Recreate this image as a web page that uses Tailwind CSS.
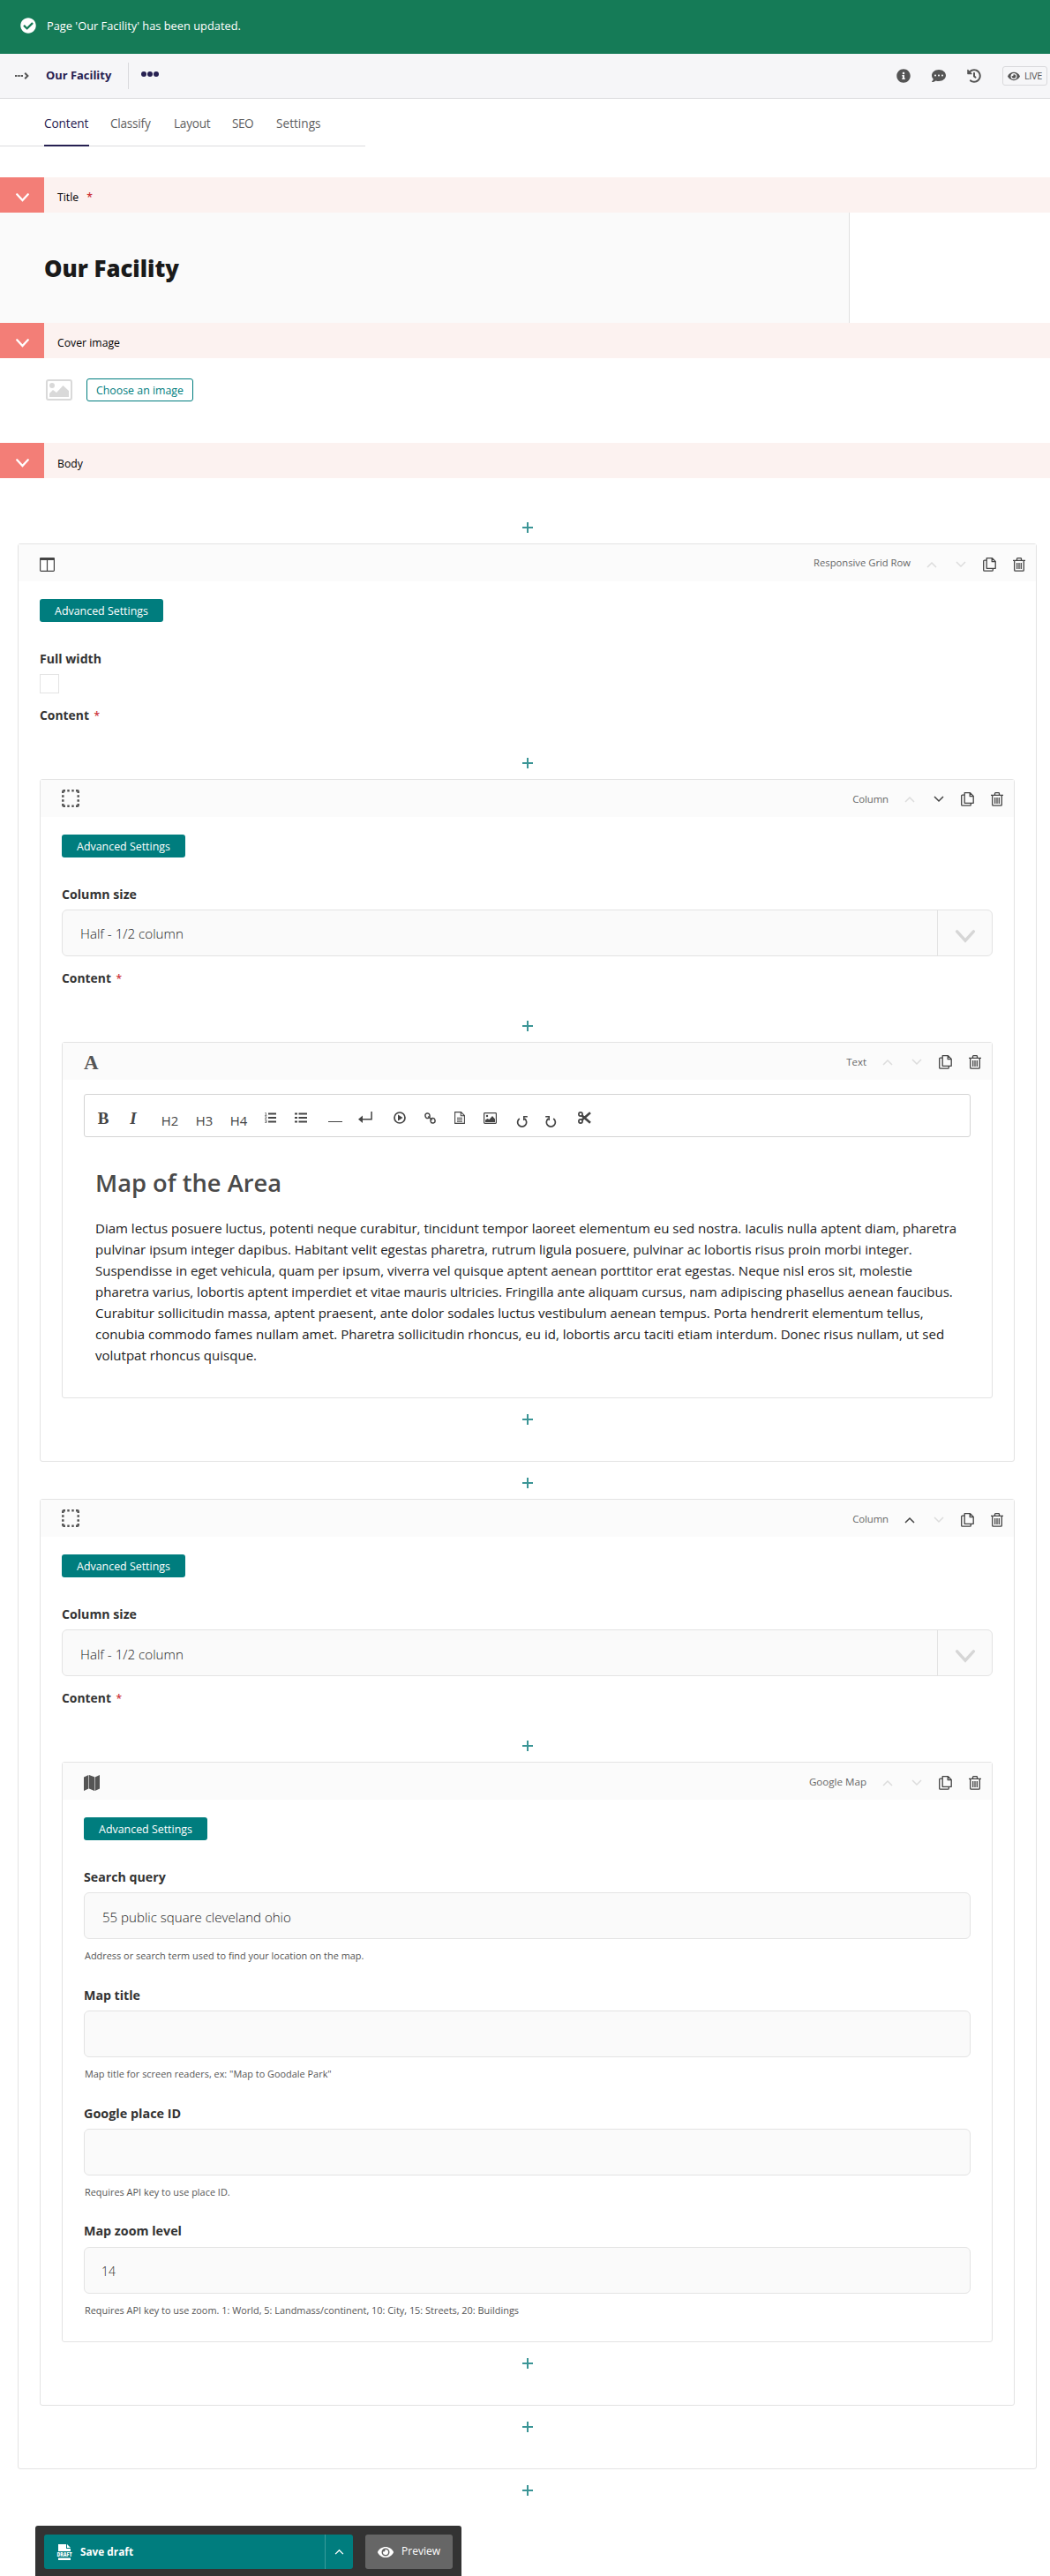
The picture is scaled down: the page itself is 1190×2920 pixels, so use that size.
<!DOCTYPE html>
<html lang="en">
<head>
<meta charset="utf-8">
<title>Editing: Our Facility</title>
<script src="https://cdn.jsdelivr.net/npm/@tailwindcss/browser@4"></script>
</head>
<body class="bg-white font-['Open_Sans',sans-serif] text-[#333] w-[1190px] h-[2920px] overflow-hidden">

<!-- Icon sprite -->
<svg width="0" height="0" class="hidden">
  <symbol id="up" viewBox="0 0 12 8"><path d="M1 7l5-5 5 5" fill="none" stroke="currentColor" stroke-width="1.500"/></symbol>
  <symbol id="down" viewBox="0 0 12 8"><path d="M1 1l5 5 5-5" fill="none" stroke="currentColor" stroke-width="1.500"/></symbol>
  <symbol id="chevron" viewBox="0 0 24 16"><path d="M2 2l10 11L22 2" fill="none" stroke="currentColor" stroke-width="3.600" stroke-linecap="round"/></symbol>
  <symbol id="copy" viewBox="0 0 15 16"><path d="M4 3.200H1.700a1 1 0 0 0-1 1v10a1 1 0 0 0 1 1h8.600a1 1 0 0 0 1-1V12.500" fill="none" stroke="currentColor" stroke-width="1.300"/><path d="M4.200.700h6.300l3.700 3.700v7.900h-10zM10.200.700v4h4" fill="none" stroke="currentColor" stroke-width="1.300" stroke-linejoin="round"/></symbol>
  <symbol id="trash" viewBox="0 0 14 16"><path d="M0 3.300h14M4.500 3V1.500a.8.800 0 0 1 .8-.8h3.400a.8.800 0 0 1 .8.800V3M1.700 3.500v10.700a1 1 0 0 0 1 1h8.600a1 1 0 0 0 1-1V3.500M4.700 6v7M7 6v7M9.300 6v7" fill="none" stroke="currentColor" stroke-width="1.300"/></symbol>
  <symbol id="plus" viewBox="0 0 12 12"><path d="M6 0v12M0 6h12" stroke="currentColor" stroke-width="2"/></symbol>
  <symbol id="dashed" viewBox="0 0 20 20"><path d="M1.300 4V2.300a1 1 0 0 1 1-1H4M16 1.300h1.700a1 1 0 0 1 1 1V4M18.700 16v1.700a1 1 0 0 1-1 1H16M4 18.700H2.300a1 1 0 0 1-1-1V16M6.300 1.300h2.400M11.300 1.300h2.400M6.300 18.700h2.400M11.300 18.700h2.400M1.300 6.300v2.400M1.300 11.300v2.400M18.700 6.300v2.400M18.700 11.300v2.400" fill="none" stroke="currentColor" stroke-width="2.500"/></symbol>
  <symbol id="eye" viewBox="0 0 576 512"><path fill="currentColor" d="M572.520 241.400C518.290 135.590 410.930 64 288 64S57.680 135.640 3.480 241.410a32.350 32.350 0 0 0 0 29.190C57.710 376.410 165.070 448 288 448s230.320-71.640 284.520-177.410a32.350 32.350 0 0 0 0-29.190zM288 400a144 144 0 1 1 144-144 143.930 143.930 0 0 1-144 144zm0-240a95.310 95.310 0 0 0-25.310 3.790 47.850 47.850 0 0 1-66.900 66.900A95.780 95.780 0 1 0 288 160z"/></symbol>
</svg>

<!-- Success message -->
<div class="flex h-[61px] items-center bg-[#157b57] pl-[23px] text-white">
  <svg class="mb-[3px] h-[18px] w-[18px]" viewBox="0 0 512 512"><path fill="currentColor" d="M504 256c0 136.967-111.033 248-248 248S8 392.967 8 256 119.033 8 256 8s248 111.033 248 248zM227.314 387.314l184-184c6.248-6.248 6.248-16.379 0-22.627l-22.627-22.627c-6.248-6.249-16.379-6.249-22.628 0L216 308.118l-70.059-70.059c-6.248-6.248-16.379-6.248-22.628 0l-22.627 22.627c-6.248 6.248-6.248 16.379 0 22.627l104 104c6.249 6.249 16.379 6.249 22.628.001z"/></svg>
  <p class="ml-3 pb-0.5 text-[12.83px]">Page 'Our Facility' has been updated.</p>
</div>

<!-- Page header -->
<header class="flex h-[51px] items-center border-b border-[#dcdcde] bg-[#f6f6f8] pl-[17px] pr-[3px]">
  <svg class="h-[8px] w-[16px] text-[#555]" viewBox="0 0 16 8"><path d="M0 4h2.400M3.300 4h2.400M6.600 4H9" stroke="currentColor" stroke-width="2"/><path d="M11.200.800l3.200 3.200-3.200 3.200" fill="none" stroke="currentColor" stroke-width="2"/></svg>
  <h1 class="ml-[19px] text-[12.92px] font-bold text-[#262051]">Our Facility</h1>
  <div class="ml-[19px] h-[30px] w-px bg-[#d9d9dc]"></div>
  <svg class="mb-1 ml-[14px] h-[6px] w-[20px] text-[#262051]" viewBox="0 0 20 6"><g fill="currentColor"><circle cx="3" cy="3" r="3"/><circle cx="10" cy="3" r="3"/><circle cx="17" cy="3" r="3"/></g></svg>
  <div class="ml-auto flex items-center text-[#555]">
    <svg class="h-4 w-4" viewBox="0 0 512 512"><path fill="currentColor" d="M256 8C119.043 8 8 119.083 8 256c0 136.997 111.043 248 248 248s248-111.003 248-248C504 119.083 392.957 8 256 8zm0 110c23.196 0 42 18.804 42 42s-18.804 42-42 42-42-18.804-42-42 18.804-42 42-42zm56 254c0 6.627-5.373 12-12 12h-88c-6.627 0-12-5.373-12-12v-24c0-6.627 5.373-12 12-12h12v-64h-12c-6.627 0-12-5.373-12-12v-24c0-6.627 5.373-12 12-12h64c6.627 0 12 5.373 12 12v100h12c6.627 0 12 5.373 12 12v24z"/></svg>
    <svg class="ml-6 h-4 w-4" viewBox="0 0 512 512"><path fill="currentColor" d="M256 32C114.600 32 0 125.100 0 240c0 49.600 21.400 95 57 130.700C44.500 421.100 2.700 466 2.200 466.500c-2.200 2.300-2.800 5.700-1.500 8.700S4.800 480 8 480c66.300 0 116-31.800 140.600-51.400 32.700 12.300 69 19.400 107.400 19.400 141.400 0 256-93.100 256-208S397.400 32 256 32zM128 272c-17.700 0-32-14.300-32-32s14.300-32 32-32 32 14.300 32 32-14.300 32-32 32zm128 0c-17.700 0-32-14.300-32-32s14.300-32 32-32 32 14.300 32 32-14.300 32-32 32zm128 0c-17.700 0-32-14.300-32-32s14.300-32 32-32 32 14.300 32 32-14.300 32-32 32z"/></svg>
    <svg class="ml-6 h-4 w-4" viewBox="0 0 512 512"><path fill="currentColor" d="M504 255.531c.253 136.640-111.180 248.372-247.820 248.468-59.015.042-113.223-20.530-155.822-54.911-11.077-8.940-11.905-25.541-1.839-35.607l11.267-11.267c8.609-8.609 22.353-9.551 31.891-1.984C173.062 425.135 212.781 440 256 440c101.705 0 184-82.311 184-184 0-101.705-82.311-184-184-184-48.814 0-93.149 18.969-126.068 49.932l50.754 50.754c10.080 10.080 2.941 27.314-11.313 27.314H24c-8.837 0-16-7.163-16-16V38.627c0-14.254 17.234-21.393 27.314-11.314l49.372 49.372C129.209 34.136 189.552 8 256 8c136.810 0 247.747 110.780 248 247.531zm-180.912 78.784l9.823-12.630c8.138-10.463 6.253-25.542-4.210-33.679L288 256.349V152c0-13.255-10.745-24-24-24h-16c-13.255 0-24 10.745-24 24v135.651l65.409 50.874c10.463 8.137 25.541 6.253 33.679-4.210z"/></svg>
    <div class="ml-6 flex h-[22px] w-[51px] items-center rounded-[3px] border border-[#d9d9dc] pl-[5px]">
      <svg class="h-[13px] w-[14px]"><use href="#eye"/></svg>
      <span class="ml-[5px] text-[11px] tracking-[-0.4px]">LIVE</span>
    </div>
  </div>
</header>

<!-- Tabs -->
<nav class="flex h-[54px] w-[414px] border-b border-[#dcdcde] pl-[50px] text-[13.65px] font-medium text-[#5f5f5f]">
  <a class="mb-[-1px] w-[51px] border-b-2 border-[#262051] pt-[18px] leading-5 tracking-[-0.1px] text-[#262051]">Content</a>
  <a class="ml-[24px] w-[48px] pt-[18px] leading-5 tracking-[-0.25px]">Classify</a>
  <a class="ml-[24px] w-[43px] pt-[18px] leading-5 tracking-[-0.25px]">Layout</a>
  <a class="ml-[23px] w-[25px] pt-[18px] leading-5 tracking-[-0.5px]">SEO</a>
  <a class="ml-[25px] pt-[18px] leading-5">Settings</a>
</nav>

<main>
  <!-- Title -->
  <div class="mt-[35px] flex h-[40px] bg-[#fcf2f0] text-[12.24px] text-black">
    <div class="flex w-[50px] items-center justify-center bg-[#f37e77] pt-[6px] text-white"><svg class="h-[10px] w-[15px]"><use href="#chevron"/></svg></div>
    <div class="pl-[15px] pt-[13px] leading-5">Title <span class="ml-[6px] font-semibold text-[#cd3238]">*</span></div>
  </div>
  <div class="flex h-[125px] w-[963px] items-center border-r border-[#e0e0e0] bg-[#fafafa] pl-[50px] pt-0.5">
    <div class="text-[25.76px] font-extrabold text-[#1a1a1a]">Our Facility</div>
  </div>

  <!-- Cover image -->
  <div class="flex h-[40px] bg-[#fcf2f0] text-[12.24px] text-black">
    <div class="flex w-[50px] items-center justify-center bg-[#f37e77] pt-[6px] text-white"><svg class="h-[10px] w-[15px]"><use href="#chevron"/></svg></div>
    <div class="pl-[15px] pt-[13px] leading-5">Cover image</div>
  </div>
  <div class="mt-[23px] flex h-[26px] items-center pl-[52px]">
    <svg class="h-[24px] w-[30px] text-[#d9d9d9]" viewBox="0 0 30 24"><rect x="1" y="1" width="28" height="22" rx="2" fill="none" stroke="currentColor" stroke-width="2"/><circle cx="7" cy="7" r="3" fill="currentColor"/><path d="M4 20v-4l4-4 4 3 7.500-8L26 13v7z" fill="currentColor"/></svg>
    <button class="ml-4 h-[26px] w-[121px] rounded-[3px] border border-[#007d7e] text-[12.36px] leading-[25px] text-[#007d7e]">Choose an image</button>
  </div>

  <!-- Body -->
  <div class="mt-[47px] flex h-[40px] bg-[#fcf2f0] text-[12.24px] text-black">
    <div class="flex w-[50px] items-center justify-center bg-[#f37e77] pt-[6px] text-white"><svg class="h-[10px] w-[15px]"><use href="#chevron"/></svg></div>
    <div class="pl-[15px] pt-[14px] leading-5">Body</div>
  </div>

  <div class="ml-5 w-[1155px] pt-8">
    <div class="flex h-[42px] justify-center pt-[18px] text-[#3b9596]"><svg class="h-3 w-3"><use href="#plus"/></svg></div>

    <!-- Responsive grid row -->
    <section class="rounded-[3px] border border-[#e3e3e3] px-6 pb-[29px]">
      <div class="-mx-6 flex h-[42px] items-center bg-[#fbfbfb] pl-6 pr-[3px] text-[11.24px] text-[#666]">
        <svg class="mt-1 h-[16px] w-[17px] text-[#444]" viewBox="0 0 17 16"><path d="M.6 1.500h15.800v13a.9.900 0 0 1-.9.900h-14a.9.900 0 0 1-.9-.9zM8.500 2v13" fill="#fff" stroke="currentColor" stroke-width="1.200"/><path d="M0 1a1 1 0 0 1 1-1h15a1 1 0 0 1 1 1v2H0z" fill="currentColor"/></svg>
        <span class="ml-auto mr-[7px] pt-px">Responsive Grid Row</span>
        <div class="flex w-[132px] pt-[3px] text-[#444]">
          <div class="flex w-[33px] items-center justify-center text-[#dcdcdc]"><svg class="h-[8px] w-[12px]"><use href="#up"/></svg></div>
          <div class="flex w-[33px] items-center justify-center text-[#dcdcdc]"><svg class="h-[8px] w-[12px]"><use href="#down"/></svg></div>
          <div class="flex w-[33px] justify-center"><svg class="h-[16px] w-[15px]"><use href="#copy"/></svg></div>
          <div class="flex w-[33px] justify-center"><svg class="h-[16px] w-[14px]"><use href="#trash"/></svg></div>
        </div>
      </div>
      <button class="mt-5 block h-[26px] w-[140px] rounded-[3px] bg-[#007d7e] text-[12.42px] leading-[28px] text-white">Advanced Settings</button>
      <div class="mt-[31px] h-5 text-[14.1px] font-bold leading-[21px]">Full width</div>
      <div class="mt-2 h-[22px] w-[22px] border border-[#e3e3e3] bg-white"></div>
      <div class="mt-[15px] h-5 text-[13.9px] font-bold leading-5">Content <span class="ml-[2px] text-[12px] font-semibold text-[#cd3238]">*</span></div>
      <div class="mt-5 flex h-[42px] justify-center pt-[18px] text-[#3b9596]"><svg class="h-3 w-3"><use href="#plus"/></svg></div>

      <!-- Column 1 -->
      <section class="rounded-[3px] border border-[#e3e3e3] px-6 pb-[29px]">
        <div class="-mx-6 flex h-[42px] items-center bg-[#fbfbfb] pl-6 pr-[3px] text-[11.4px] text-[#666]">
          <svg class="h-[20px] w-[20px] text-[#555]"><use href="#dashed"/></svg>
          <span class="ml-auto mr-[7px] pt-px tracking-[-0.1px]">Column</span>
          <div class="flex w-[132px] pt-[2px] text-[#444]">
            <div class="flex w-[33px] items-center justify-center text-[#dcdcdc]"><svg class="h-[8px] w-[12px]"><use href="#up"/></svg></div>
            <div class="flex w-[33px] items-center justify-center"><svg class="h-[8px] w-[12px]"><use href="#down"/></svg></div>
            <div class="flex w-[33px] justify-center"><svg class="h-[16px] w-[15px]"><use href="#copy"/></svg></div>
            <div class="flex w-[33px] justify-center"><svg class="h-[16px] w-[14px]"><use href="#trash"/></svg></div>
          </div>
        </div>
        <button class="mt-5 block h-[26px] w-[140px] rounded-[3px] bg-[#007d7e] text-[12.42px] leading-[27px] text-white">Advanced Settings</button>
        <div class="mt-[31px] h-5 text-[14.17px] font-bold leading-[22px]">Column size</div>
        <div class="mt-2 flex h-[53px] items-center rounded-[6px] border border-[#e3e3e3] bg-[#fafafa] pl-5 text-[15.17px] font-light text-[#222]">
          <span class="pt-0.5">Half - 1/2 column</span>
          <div class="ml-auto flex h-full w-[62px] items-center justify-center border-l border-[#e3e3e3] pt-2 text-[#d6d6d6]"><svg class="h-[15px] w-[24px]"><use href="#chevron"/></svg></div>
        </div>
        <div class="mt-[15px] h-5 text-[13.9px] font-bold leading-5">Content <span class="ml-[2px] text-[12px] font-semibold text-[#cd3238]">*</span></div>
        <div class="mt-5 flex h-[42px] justify-center pt-[18px] text-[#3b9596]"><svg class="h-3 w-3"><use href="#plus"/></svg></div>

        <!-- Text block -->
        <section class="rounded-[3px] border border-[#e3e3e3] px-6 pb-[36px]">
          <div class="-mx-6 flex h-[42px] items-center bg-[#fbfbfb] pl-6 pr-[3px] text-[11.4px] text-[#666]">
            <span class="mt-0.5 font-['Liberation_Serif',serif] text-[23px] font-bold leading-none text-[#555]">A</span>
            <span class="ml-auto mr-[7px] pt-px">Text</span>
            <div class="flex w-[132px] pt-[2px] text-[#444]">
              <div class="flex w-[33px] items-center justify-center text-[#dcdcdc]"><svg class="h-[8px] w-[12px]"><use href="#up"/></svg></div>
              <div class="flex w-[33px] items-center justify-center text-[#dcdcdc]"><svg class="h-[8px] w-[12px]"><use href="#down"/></svg></div>
              <div class="flex w-[33px] justify-center"><svg class="h-[16px] w-[15px]"><use href="#copy"/></svg></div>
              <div class="flex w-[33px] justify-center"><svg class="h-[16px] w-[14px]"><use href="#trash"/></svg></div>
            </div>
          </div>
          <div class="mt-4 flex h-[49px] items-center rounded-[3px] border border-[#d4d4d4] pl-1 pt-[5px] text-[#444]">
            <div class="w-[34px] text-center font-['Liberation_Serif',serif] text-[19px] font-bold leading-none">B</div>
            <div class="w-[34px] text-center font-['Liberation_Serif',serif] text-[19px] font-bold italic leading-none">I</div>
            <div class="ml-[5px] w-[39px] pt-[6px] text-center text-[14.9px] leading-5">H2</div>
            <div class="w-[39px] pt-[6px] text-center text-[14.9px] leading-5">H3</div>
            <div class="w-[39px] pt-[6px] text-center text-[14.9px] leading-5">H4</div>
            <div class="flex w-[33px] justify-center"><svg class="h-[12px] w-[13px]" viewBox="0 0 13 12"><path d="M4 1.500h9M4 6h9M4 10.500h9" stroke="currentColor" stroke-width="1.800"/><path d="M.4.500h1V3M0 3.400h2.400M.3 4.800h1.600v1.100l-1.600 1.200h2M.3 8.800h1.700v2.700H.3M.6 10.100H2" fill="none" stroke="currentColor" stroke-width=".7"/></svg></div>
            <div class="flex w-[35px] justify-center"><svg class="h-[12px] w-[14px]" viewBox="0 0 14 12"><path d="M4.500 1.500H14M4.500 6H14M4.500 10.500H14M0 1.500h3M0 6h3M0 10.500h3" stroke="currentColor" stroke-width="2.200"/></svg></div>
            <div class="ml-[5px] flex w-[34px] justify-center pt-[9px]"><div class="h-px w-[16px] bg-[#444]"></div></div>
            <div class="flex w-[34px] justify-center"><svg class="h-[14px] w-[16px]" viewBox="0 0 16 14"><path d="M15.100 0v8.700H3" fill="none" stroke="currentColor" stroke-width="1.500"/><path d="M0 8.700l5-4.200v8.400z" fill="currentColor"/></svg></div>
            <div class="ml-[5px] flex w-[34px] justify-center"><svg class="h-[14px] w-[14px]" viewBox="0 0 14 14"><circle cx="7" cy="7" r="6" fill="none" stroke="currentColor" stroke-width="1.700"/><path d="M5 3.500L10.500 7 5 10.500z" fill="currentColor"/></svg></div>
            <div class="flex w-[34px] justify-center"><svg class="h-[13px] w-[13px]" viewBox="0 0 13 13"><g fill="none" stroke="currentColor" stroke-width="1.500"><rect x="1" y="1" width="5" height="5.500" rx="2.300" transform="rotate(-10 3.500 3.700)"/><rect x="7" y="6.500" width="5" height="5.500" rx="2.300" transform="rotate(-10 9.500 9.200)"/><path d="M4.200 4.500l4.600 4"/></g></svg></div>
            <div class="flex w-[34px] justify-center"><svg class="h-[14px] w-[12px]" viewBox="0 0 12 14"><path d="M.600.600h6.900l3.900 3.900v8.900H.600zM7.300.800v4h4M3 7.200h6M3 9.200h6M3 11.200h6" fill="none" stroke="currentColor" stroke-width="1.100"/></svg></div>
            <div class="flex w-[34px] justify-center"><svg class="h-[13px] w-[15px]" viewBox="0 0 15 13"><rect x=".6" y=".6" width="13.800" height="11.800" rx=".8" fill="none" stroke="currentColor" stroke-width="1.200"/><circle cx="4" cy="4" r="1.200" fill="currentColor"/><path d="M2 11V8.500L4.500 7l2 1L10 4l3 3.500V11z" fill="currentColor"/></svg></div>
            <div class="ml-[3px] flex w-[33px] justify-center pt-[9px]"><svg class="h-[13px] w-[13px]" viewBox="0 0 13 13"><path d="M3.800 3A5 5 0 1 0 9.500 3" fill="none" stroke="currentColor" stroke-width="1.700"/><path d="M8 0h4.800v1.600H9.600V5H8z" fill="currentColor"/></svg></div>
            <div class="flex w-[33px] justify-center pt-[9px]"><svg class="h-[13px] w-[13px]" viewBox="0 0 13 13"><path d="M9.200 3A5 5 0 1 1 3.500 3" fill="none" stroke="currentColor" stroke-width="1.700"/><path d="M5 0H.200v1.600h3.200V5H5z" fill="currentColor"/></svg></div>
            <div class="ml-[4px] flex w-[34px] justify-center"><svg class="h-[14px] w-[15px]" viewBox="0 0 15 14"><g fill="none" stroke="currentColor"><circle cx="3" cy="3" r="2.100" stroke-width="1.700"/><circle cx="3" cy="11" r="2.100" stroke-width="1.700"/><path d="M4.500 4.500l9.500 8.300M4.500 9.500L14 1.200" stroke-width="2.600"/></g></svg></div>
          </div>
          <h2 class="ml-[13px] mt-[32px] h-[41px] whitespace-nowrap text-[27.3px] font-semibold leading-10 text-[#4a4a4a]">Map of the Area</h2>
          <p class="ml-[13px] mt-[18px] whitespace-nowrap text-[15.04px] leading-6 text-[#222]">Diam lectus posuere luctus, potenti neque curabitur, tincidunt tempor laoreet elementum eu sed nostra. Iaculis nulla aptent diam, pharetra<br>pulvinar ipsum integer dapibus. Habitant velit egestas pharetra, rutrum ligula posuere, pulvinar ac lobortis risus proin morbi integer.<br>Suspendisse in eget vehicula, quam per ipsum, viverra vel quisque aptent aenean porttitor erat egestas. Neque nisl eros sit, molestie<br>pharetra varius, lobortis aptent imperdiet et vitae mauris ultricies. Fringilla ante aliquam cursus, nam adipiscing phasellus aenean faucibus.<br>Curabitur sollicitudin massa, aptent praesent, ante dolor sodales luctus vestibulum aenean tempus. Porta hendrerit elementum tellus,<br>conubia commodo fames nullam amet. Pharetra sollicitudin rhoncus, eu id, lobortis arcu taciti etiam interdum. Donec risus nullam, ut sed<br>volutpat rhoncus quisque.</p>
        </section>
        <div class="flex h-[42px] justify-center pt-[18px] text-[#3b9596]"><svg class="h-3 w-3"><use href="#plus"/></svg></div>
      </section>
      <div class="flex h-[42px] justify-center pt-[18px] text-[#3b9596]"><svg class="h-3 w-3"><use href="#plus"/></svg></div>

      <!-- Column 2 -->
      <section class="rounded-[3px] border border-[#e3e3e3] px-6 pb-[29px]">
        <div class="-mx-6 flex h-[42px] items-center bg-[#fbfbfb] pl-6 pr-[3px] text-[11.4px] text-[#666]">
          <svg class="h-[20px] w-[20px] text-[#555]"><use href="#dashed"/></svg>
          <span class="ml-auto mr-[7px] pt-px tracking-[-0.1px]">Column</span>
          <div class="flex w-[132px] pt-[4px] text-[#444]">
            <div class="flex w-[33px] items-center justify-center"><svg class="h-[8px] w-[12px]"><use href="#up"/></svg></div>
            <div class="flex w-[33px] items-center justify-center text-[#dcdcdc]"><svg class="h-[8px] w-[12px]"><use href="#down"/></svg></div>
            <div class="flex w-[33px] justify-center"><svg class="h-[16px] w-[15px]"><use href="#copy"/></svg></div>
            <div class="flex w-[33px] justify-center"><svg class="h-[16px] w-[14px]"><use href="#trash"/></svg></div>
          </div>
        </div>
        <button class="mt-5 block h-[26px] w-[140px] rounded-[3px] bg-[#007d7e] text-[12.42px] leading-[28px] text-white">Advanced Settings</button>
        <div class="mt-[31px] h-5 text-[14.17px] font-bold leading-[22px]">Column size</div>
        <div class="mt-2 flex h-[53px] items-center rounded-[6px] border border-[#e3e3e3] bg-[#fafafa] pl-5 text-[15.17px] font-light text-[#222]">
          <span class="pt-[3px]">Half - 1/2 column</span>
          <div class="ml-auto flex h-full w-[62px] items-center justify-center border-l border-[#e3e3e3] pt-2 text-[#d6d6d6]"><svg class="h-[15px] w-[24px]"><use href="#chevron"/></svg></div>
        </div>
        <div class="mt-[15px] h-5 text-[13.9px] font-bold leading-5">Content <span class="ml-[2px] text-[12px] font-semibold text-[#cd3238]">*</span></div>
        <div class="mt-5 flex h-[42px] justify-center pt-[18px] text-[#3b9596]"><svg class="h-3 w-3"><use href="#plus"/></svg></div>

        <!-- Google Map block -->
        <section class="rounded-[3px] border border-[#e3e3e3] px-6 pb-[27px]">
          <div class="-mx-6 flex h-[42px] items-center bg-[#fbfbfb] pl-6 pr-[3px] text-[11.6px] text-[#666]">
            <svg class="mt-1 h-[18px] w-[18px] text-[#555]" viewBox="0 0 18 18"><path d="M0 2.600L5.400 0v15.600L0 18zM6 0l6 2.300V18l-6-2.400zM12.600 2.400L18 0v15.600L12.600 18z" fill="currentColor"/></svg>
            <span class="ml-auto mr-[7px] pt-px">Google Map</span>
            <div class="flex w-[132px] pt-[4px] text-[#444]">
              <div class="flex w-[33px] items-center justify-center text-[#dcdcdc]"><svg class="h-[8px] w-[12px]"><use href="#up"/></svg></div>
              <div class="flex w-[33px] items-center justify-center text-[#dcdcdc]"><svg class="h-[8px] w-[12px]"><use href="#down"/></svg></div>
              <div class="flex w-[33px] justify-center"><svg class="h-[16px] w-[15px]"><use href="#copy"/></svg></div>
              <div class="flex w-[33px] justify-center"><svg class="h-[16px] w-[14px]"><use href="#trash"/></svg></div>
            </div>
          </div>
          <button class="mt-5 block h-[26px] w-[140px] rounded-[3px] bg-[#007d7e] text-[12.42px] leading-[28px] text-white">Advanced Settings</button>

          <div class="mt-[31px] flex flex-col gap-[26px]">
            <div>
              <div class="h-5 text-[14.2px] font-bold leading-[21px]">Search query</div>
              <div class="mt-2 flex h-[53px] items-center rounded-[6px] border border-[#e3e3e3] bg-[#fafafa] pl-5 pt-[3px] text-[15.07px] font-light text-[#222]">55 public square cleveland ohio</div>
              <p class="ml-px mt-[11px] h-4 text-[10.93px] leading-4 text-[#555]">Address or search term used to find your location on the map.</p>
            </div>
            <div>
              <div class="h-5 text-[14.2px] font-bold leading-[21px]">Map title</div>
              <div class="mt-2 h-[53px] rounded-[6px] border border-[#e3e3e3] bg-[#fafafa]"></div>
              <p class="ml-px mt-[11px] h-4 text-[10.92px] leading-4 text-[#555]">Map title for screen readers, ex: "Map to Goodale Park"</p>
            </div>
            <div>
              <div class="h-5 text-[14.4px] font-bold leading-[21px]">Google place ID</div>
              <div class="mt-2 h-[53px] rounded-[6px] border border-[#e3e3e3] bg-[#fafafa]"></div>
              <p class="ml-px mt-[11px] h-4 text-[10.92px] leading-4 text-[#555]">Requires API key to use place ID.</p>
            </div>
            <div>
              <div class="h-5 text-[14.29px] font-bold leading-5">Map zoom level</div>
              <div class="mt-2 flex h-[53px] items-center rounded-[6px] border border-[#e3e3e3] bg-[#fafafa] pl-[19px] pt-0.5 text-[14px] font-light text-[#222]">14</div>
              <p class="ml-px mt-[11px] h-4 text-[10.91px] leading-4 text-[#555]">Requires API key to use zoom. 1: World, 5: Landmass/continent, 10: City, 15: Streets, 20: Buildings</p>
            </div>
          </div>
        </section>
        <div class="flex h-[42px] justify-center pt-[18px] text-[#3b9596]"><svg class="h-3 w-3"><use href="#plus"/></svg></div>
      </section>
      <div class="flex h-[42px] justify-center pt-[18px] text-[#3b9596]"><svg class="h-3 w-3"><use href="#plus"/></svg></div>
    </section>
    <div class="flex h-[42px] justify-center pt-[18px] text-[#3b9596]"><svg class="h-3 w-3"><use href="#plus"/></svg></div>
  </div>
</main>

<!-- Action bar -->
<footer class="ml-10 mt-[22px] flex h-[57px] w-[483px] items-start rounded-t-[3px] bg-[#333] px-[10px] pt-[10px] text-white">
  <div class="flex h-[39px] w-[350px] rounded-[3px] bg-[#007d7e]">
    <div class="flex w-[318px] items-center pl-[14px]">
      <svg class="h-[18px] w-[18px] overflow-visible" viewBox="0 0 18 18"><path d="M2 0h9v5h5v3H2zM12 0l4 4h-4zM2 15.400h14V18H2z" fill="currentColor"/><text x="9" y="13.900" text-anchor="middle" textLength="17" lengthAdjust="spacingAndGlyphs" font-family="Open Sans, sans-serif" font-size="6" font-weight="800" fill="currentColor">DRAFT</text></svg>
      <span class="ml-[9px] text-[11.8px] font-bold">Save draft</span>
    </div>
    <div class="flex flex-1 items-center justify-center border-l border-[#3a9c9c]"><svg class="h-[7px] w-[11px]"><use href="#up"/></svg></div>
  </div>
  <div class="ml-[14px] flex h-[39px] w-[99px] items-center rounded-[3px] bg-[#666] pl-[14px]">
    <svg class="h-4 w-[18px]"><use href="#eye"/></svg>
    <span class="ml-[9px] text-[12.02px]">Preview</span>
  </div>
</footer>
</body>
</html>
